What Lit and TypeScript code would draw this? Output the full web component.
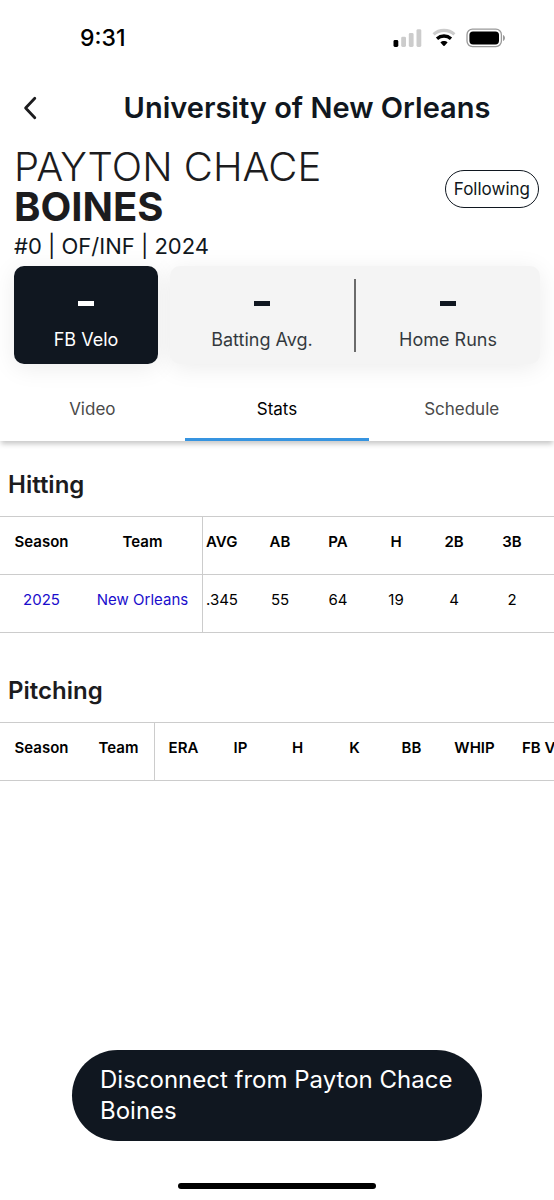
import { LitElement, html, css } from "lit";
import { customElement, property, state } from "lit/decorators.js";
import { classMap } from "lit/directives/class-map.js";

interface StatColumn {
  label: string;
  kind: "season" | "team" | "wide-team" | "lead" | "stat" | "count" | "whip" | "velo";
}

@customElement("status-bar")
class StatusBar extends LitElement {
  static styles = css`
    :host {
      display: flex;
      justify-content: space-between;
      align-items: center;
      height: 76px;
      padding: 0 48px 0 80px;
      color: #000;
    }
    .time {
      font-size: 23px;
      font-weight: 500;
      line-height: 28px;
    }
    .icons {
      display: flex;
      align-items: center;
      gap: 10px;
    }
    svg {
      display: block;
    }
  `;

  render() {
    return html`
      <span class="time">9:31</span>
      <span class="icons">
        <svg width="29" height="20" viewBox="0 0 29 20" aria-label="Signal">
          <rect x="0.5" y="12" width="4.8" height="7" rx="1.4" fill="#000" />
          <rect x="8.2" y="8.7" width="4.8" height="10.3" rx="1.4" fill="#ccc" />
          <rect x="15.8" y="5" width="4.8" height="14" rx="1.4" fill="#ccc" />
          <rect x="23.5" y="1.2" width="4.8" height="17.8" rx="1.4" fill="#ccc" />
        </svg>
        <svg width="24" height="20" viewBox="0 0 24 20" aria-label="Wi-Fi">
          <path d="M1.6 6.4 C7.4 1.1 16.6 1.1 22.4 6.4" fill="none" stroke="#ccc" stroke-width="3.2" />
          <path d="M5 10.7 C9 7.1 15 7.1 19 10.7" fill="none" stroke="#000" stroke-width="3.3" />
          <path d="M8.4 14.4 C10.4 12.6 13.6 12.6 15.6 14.4 L12.6 17.8 Q12 18.4 11.4 17.8 Z" fill="#000" />
        </svg>
        <svg width="40" height="20" viewBox="0 0 40 20" aria-label="Battery">
          <rect x="1" y="1.2" width="34.4" height="17.4" rx="5.5" fill="none" stroke="#999" stroke-width="1.3" />
          <rect x="3.4" y="3.4" width="29.6" height="13" rx="3.6" fill="#000" />
          <path d="M37 7 C39.6 8 39.6 12 37 13 Z" fill="#999" />
        </svg>
      </span>
    `;
  }
}

@customElement("stat-table")
class StatTable extends LitElement {
  @property() heading = "";
  @property({ attribute: false }) columns: StatColumn[] = [];
  @property({ attribute: false }) rows: string[][] = [];

  static styles = css`
    :host {
      display: block;
    }
    h2 {
      margin: 0;
      padding: 0 8px 14px;
      font-size: 24px;
      font-weight: 600;
      line-height: 34px;
      color: #1c1c1e;
    }
    .scroller {
      overflow: hidden;
    }
    table {
      width: 100%;
      table-layout: fixed;
      border-collapse: separate;
      border-spacing: 0;
      border-top: 1px solid #ccc;
      font-size: 15px;
      line-height: 24px;
      color: #000;
    }
    th,
    td {
      box-sizing: border-box;
      height: 58px;
      padding: 13px 0 20px;
      border-bottom: 1px solid #ccc;
      text-align: center;
      vertical-align: top;
      white-space: nowrap;
    }
    th {
      font-weight: 600;
    }
    .season {
      width: 83px;
    }
    .team {
      width: 72px;
      border-right: 1px solid #ccc;
    }
    .wide-team {
      width: 120px;
      border-right: 1px solid #ccc;
    }
    .lead {
      width: 48px;
      padding-left: 3px;
      text-align: left;
    }
    .stat {
      width: 57px;
    }
    .count {
      width: 58px;
    }
    .whip {
      width: 69px;
    }
    .velo {
      padding-left: 13px;
      text-align: left;
    }
    a {
      color: #1a0dcc;
      text-decoration: none;
    }
  `;

  render() {
    const linked = (i: number) => i < 2;
    return html`
      <h2 id="heading">${this.heading}</h2>
      <div class="scroller">
        <table aria-labelledby="heading">
          <thead>
            <tr>
              ${this.columns.map((c) => html`<th class=${c.kind} scope="col">${c.label}</th>`)}
              ${this.rows.length ? html`<th></th>` : ""}
            </tr>
          </thead>
          <tbody>
            ${this.rows.map(
              (row) => html`<tr>
                ${row.map(
                  (value, i) => html`<td class=${this.columns[i].kind}>
                    ${linked(i) ? html`<a href="#">${value}</a>` : value}
                  </td>`
                )}
                <td></td>
              </tr>`
            )}
          </tbody>
        </table>
      </div>
    `;
  }
}

@customElement("app-root")
class AppRoot extends LitElement {
  @state() private tab = "Stats";

  private hitting: StatColumn[] = [
    { label: "Season", kind: "season" },
    { label: "Team", kind: "wide-team" },
    { label: "AVG", kind: "lead" },
    { label: "AB", kind: "count" },
    { label: "PA", kind: "count" },
    { label: "H", kind: "count" },
    { label: "2B", kind: "count" },
    { label: "3B", kind: "count" },
  ];

  private pitching: StatColumn[] = [
    { label: "Season", kind: "season" },
    { label: "Team", kind: "team" },
    { label: "ERA", kind: "stat" },
    { label: "IP", kind: "stat" },
    { label: "H", kind: "stat" },
    { label: "K", kind: "stat" },
    { label: "BB", kind: "stat" },
    { label: "WHIP", kind: "whip" },
    { label: "FB Velo", kind: "velo" },
  ];

  static styles = css`
    :host {
      display: flex;
      flex-direction: column;
      box-sizing: border-box;
      min-height: 100vh;
      overflow: hidden;
      background: #fff;
      color: #101720;
      font-family: Inter, "Open Sans", sans-serif;
    }
    button {
      margin: 0;
      border: 0;
      padding: 0;
      background: none;
      color: inherit;
      font: inherit;
    }
    .topbar {
      display: grid;
      grid-template-columns: 60px 1fr;
      align-items: center;
      height: 64px;
    }
    .back {
      display: grid;
      place-items: center;
      height: 44px;
    }
    h1 {
      margin: 0;
      font-size: 29px;
      font-weight: 600;
      line-height: 40px;
      text-align: center;
    }
    .player {
      display: flex;
      justify-content: space-between;
      align-items: flex-start;
      padding: 7px 15px 0 14px;
    }
    .name {
      margin: 0;
      font-size: 40px;
      font-weight: 300;
      line-height: 40px;
      color: #1c1c1e;
    }
    .name strong {
      display: block;
      font-weight: 700;
    }
    .meta {
      margin: 0;
      font-size: 22px;
      line-height: 39px;
    }
    .follow {
      box-sizing: border-box;
      height: 38px;
      margin-top: 23px;
      padding: 0 8px;
      border: 1px solid #101720;
      border-radius: 19px;
      font-size: 17px;
    }
    .cards {
      display: grid;
      grid-template-columns: 144px 1fr;
      gap: 12px;
      padding: 0 14px;
    }
    .card {
      display: flex;
      align-items: center;
      height: 98px;
      border-radius: 10px;
      background: #f4f4f4;
      box-shadow: 0 4px 24px rgba(0, 0, 0, 0.08);
    }
    .dark {
      background: #101720;
      color: #fff;
    }
    .metric {
      flex: 1;
      padding-top: 22px;
      text-align: center;
    }
    .dash {
      display: block;
      width: 16px;
      height: 5px;
      margin: 0 auto 22px;
      background: currentColor;
    }
    .label {
      display: block;
      font-size: 18px;
      line-height: 24px;
      opacity: 0.85;
    }
    .dark .label {
      opacity: 1;
    }
    .rule {
      width: 2px;
      height: 73px;
      background: #6b6b6b;
    }
    .tabs {
      display: grid;
      grid-template-columns: repeat(3, 1fr);
      height: 61px;
      margin-top: 16px;
      box-shadow: 0 4px 5px -1px rgba(0, 0, 0, 0.22);
      clip-path: inset(0 0 -12px 0);
    }
    .tab {
      border-bottom: 3px solid transparent;
      font-size: 17px;
      color: #4a4a4a;
    }
    .active {
      border-bottom-color: #3694e0;
      color: #000;
    }
    .tables {
      display: grid;
      gap: 41px;
      padding: 27px 0 48px;
    }
    .footer {
      display: flex;
      flex-direction: column;
      align-items: center;
      gap: 42px;
      margin-top: auto;
      padding: 0 72px 11px;
    }
    .disconnect {
      width: 100%;
      padding: 14px 24px 15px 28px;
      border-radius: 46px;
      background: #101720;
      color: #fff;
      font-size: 24px;
      line-height: 31px;
      text-align: left;
    }
    .home {
      width: 198px;
      height: 6px;
      border-radius: 3px;
      background: #000;
    }
  `;

  render() {
    return html`
      <status-bar></status-bar>
      <header class="topbar">
        <button class="back" aria-label="Back">
          <svg width="16" height="26" viewBox="0 0 16 26">
            <path d="M12.8 3.2 L3.6 13 L12.8 22.8" fill="none" stroke="#1c1c1e" stroke-width="2.8" stroke-linecap="round" stroke-linejoin="round" />
          </svg>
        </button>
        <h1>University of New Orleans</h1>
      </header>
      <section class="player">
        <div>
          <p class="name">PAYTON CHACE <strong>BOINES</strong></p>
          <p class="meta">#0 | OF/INF | 2024</p>
        </div>
        <button class="follow">Following</button>
      </section>
      <section class="cards">
        <div class="card dark">
          <div class="metric"><span class="dash"></span><span class="label">FB Velo</span></div>
        </div>
        <div class="card">
          <div class="metric"><span class="dash"></span><span class="label">Batting Avg.</span></div>
          <span class="rule"></span>
          <div class="metric"><span class="dash"></span><span class="label">Home Runs</span></div>
        </div>
      </section>
      <nav class="tabs">
        ${["Video", "Stats", "Schedule"].map(
          (name) => html`<button
            class=${classMap({ tab: true, active: name === this.tab })}
            @click=${() => (this.tab = name)}
          >${name}</button>`
        )}
      </nav>
      <main class="tables">
        <stat-table
          heading="Hitting"
          .columns=${this.hitting}
          .rows=${[["2025", "New Orleans", ".345", "55", "64", "19", "4", "2"]]}
        ></stat-table>
        <stat-table heading="Pitching" .columns=${this.pitching}></stat-table>
      </main>
      <footer class="footer">
        <button class="disconnect">Disconnect from Payton Chace Boines</button>
        <span class="home"></span>
      </footer>
    `;
  }
}
